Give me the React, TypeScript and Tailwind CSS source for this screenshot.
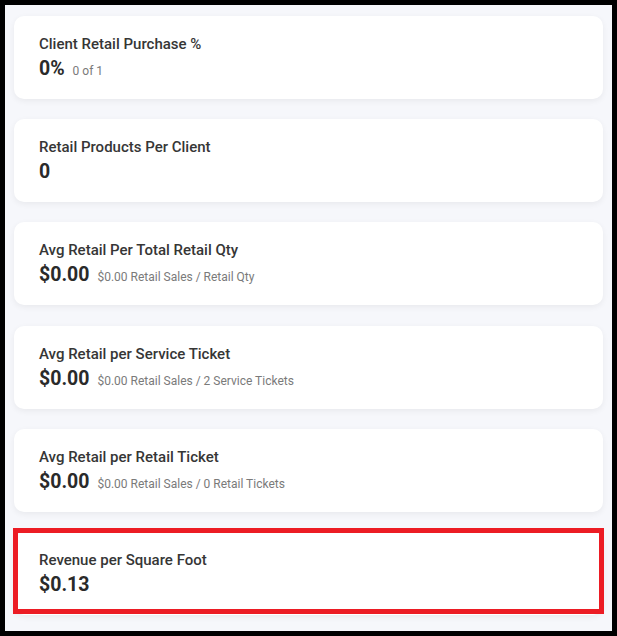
const metrics = [
  { title: 'Client Retail Purchase %', value: '0%', note: '0 of 1' },
  { title: 'Retail Products Per Client', value: '0' },
  { title: 'Avg Retail Per Total Retail Qty', value: '$0.00', note: '$0.00 Retail Sales / Retail Qty' },
  { title: 'Avg Retail per Service Ticket', value: '$0.00', note: '$0.00 Retail Sales / 2 Service Tickets' },
  { title: 'Avg Retail per Retail Ticket', value: '$0.00', note: '$0.00 Retail Sales / 0 Retail Tickets' },
  { title: 'Revenue per Square Foot', value: '$0.13', highlight: true },
]

export default function App() {
  return (
    <div className="h-[636px] w-[617px] border-[5px] border-black bg-[#f6f7fb] font-['Roboto',sans-serif] overflow-hidden">
      <div className="flex flex-col gap-[20.2px] px-[9px] pt-[11px]">
        {metrics.map((m) => (
          <div
            key={m.title}
            className="relative h-[83px] rounded-[10px] bg-white px-[25px] pt-[17px] shadow-[0_2px_6px_rgba(0,0,0,0.06)]"
          >
            <div className="text-[15px] leading-[22px] font-medium text-[#363636]">{m.title}</div>
            <div className="flex items-baseline leading-[28px]">
              <span className="text-[19.5px] font-bold text-[#2a2a2a]">{m.value}</span>
              {m.note && <span className="ml-[8px] text-[12px] text-[#7a7a7a]">{m.note}</span>}
            </div>
            {m.highlight && (
              <div className="absolute -top-[4px] -left-px -right-px bottom-[1px] border-[5px] border-[#ec1c24]" />
            )}
          </div>
        ))}
      </div>
    </div>
  )
}
